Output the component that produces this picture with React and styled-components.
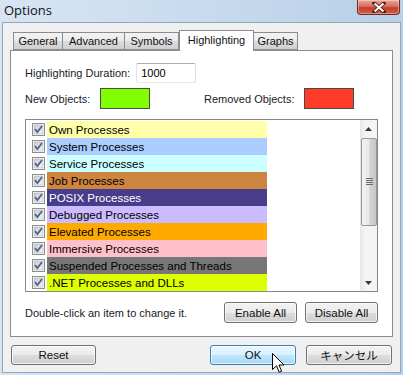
import React from 'react'
import styled, { createGlobalStyle } from 'styled-components'

const GlobalStyle = createGlobalStyle`
  html, body { margin: 0; padding: 0; background: #bcd2ea; }
  body { font-family: "Liberation Sans", Arial, sans-serif; }
`

const Window = styled.div`
  position: relative;
  width: 403px;
  height: 375px;
  display: flex;
  flex-direction: column;
  background: linear-gradient(90deg, #d7e5f3 0%, #c9dcef 45%, #b8cfe8 100%);
  overflow: hidden;
`
const TitleBar = styled.div`
  height: 22px;
  display: flex;
  align-items: flex-start;
  justify-content: space-between;
`
const Title = styled.div`
  font-family: "Open Sans", "Liberation Sans", sans-serif;
  font-size: 13px;
  color: #111;
  padding: 1px 0 0 4px;
  line-height: 18px;
`
const CloseBtn = styled.div`
  width: 43px;
  height: 15px;
  margin-right: 3px;
  box-sizing: border-box;
  border: 1px solid #6e2b22;
  border-top: none;
  border-radius: 0 0 4px 4px;
  background: linear-gradient(180deg, #e9a797 0%, #d7705f 45%, #c0402f 55%, #d25d43 100%);
  display: flex;
  align-items: center;
  justify-content: center;
  box-shadow: inset 0 0 0 1px rgba(255,255,255,0.35);
`
const Client = styled.div`
  flex: 1;
  margin: 0 2px 2px 2px;
  border: 1px solid #93a6bb;
  background: #f0f0f0;
  display: flex;
  flex-direction: column;
  padding-top: 7px;
`
const TabStrip = styled.div`
  display: flex;
  align-items: flex-end;
  height: 20px;
  padding-left: 10px;
  position: relative;
  z-index: 1;
`
const Tab = styled.div`
  box-sizing: border-box;
  width: ${p => p.w}px;
  height: ${p => (p.active ? 21 : 18)}px;
  margin-bottom: ${p => (p.active ? -1 : 0)}px;
  border: 1px solid #898c95;
  border-bottom: ${p => (p.active ? 'none' : '1px solid #898c95')};
  border-left: ${p => (p.first || p.active ? '1px solid #898c95' : 'none')};
  background: ${p => (p.active ? '#fff' : 'linear-gradient(180deg, #f3f3f3 0%, #ebebeb 50%, #dddddd 51%, #cfcfcf 100%)')};
  font-size: 11px;
  color: #111;
  display: flex;
  align-items: center;
  justify-content: center;
  padding-bottom: ${p => (p.active ? 3 : 0)}px;
`
const Panel = styled.div`
  margin: 0 7px;
  height: 287px;
  box-sizing: border-box;
  border: 1px solid #898c95;
  background: #fff;
  display: flex;
  flex-direction: column;
  padding: 12px 14px 14px 14px;
  font-size: 11px;
  color: #1a1a2a;
`
const Row = styled.div`
  display: flex;
  align-items: center;
  margin-top: ${p => p.mt || 0}px;
`
const Label = styled.span`
  width: ${p => (p.w ? `${p.w}px` : 'auto')};
  flex-shrink: 0;
`
const TextField = styled.div`
  width: 60px;
  height: 20px;
  box-sizing: border-box;
  border: 1px solid #abadb3;
  border-color: #abadb3 #dbdfe6 #e3e9ef #e2e3ea;
  border-radius: 2px;
  margin-left: 6px;
  padding: 0 4px;
  display: flex;
  align-items: center;
  color: #000;
`
const Swatch = styled.div`
  width: 50px;
  height: 21px;
  box-sizing: border-box;
  border: 1px solid #4a4a4a;
  background: ${p => p.color};
`
const Gap = styled.div`
  width: ${p => p.w}px;
`
const ListBox = styled.div`
  margin-top: 10px;
  height: 174px;
  box-sizing: border-box;
  border: 1px solid #828790;
  display: flex;
`
const Items = styled.div`
  flex: 1;
  padding: 1px 0 0 6px;
  display: flex;
  flex-direction: column;
`
const Item = styled.div`
  height: 17px;
  display: flex;
  align-items: center;
`
const Band = styled.div`
  margin-left: 2px;
  width: 218px;
  height: 17px;
  padding-left: 2px;
  background: ${p => p.bg};
  color: ${p => p.fg};
  display: flex;
  align-items: center;
  font-size: 11.5px;
`
const ScrollBar = styled.div`
  width: 17px;
  display: flex;
  flex-direction: column;
  background: linear-gradient(90deg, #e6e6e6 0%, #f4f4f4 30%, #f4f4f4 100%);
`
const Arrow = styled.div`
  height: 17px;
  display: flex;
  align-items: center;
  justify-content: center;
`
const Thumb = styled.div`
  margin: 1px 0 0 1px;
  height: 88px;
  box-sizing: border-box;
  border: 1px solid #979797;
  border-radius: 2px;
  background: linear-gradient(90deg, #f3f3f3 0%, #e8e8e8 50%, #d6d6d6 55%, #c6c6c6 100%);
  display: flex;
  align-items: center;
  justify-content: center;
`
const Track = styled.div`
  flex: 1;
`
const Button = styled.div`
  width: ${p => p.w}px;
  height: ${p => p.h || 21}px;
  box-sizing: border-box;
  border: 1px solid ${p => (p.hover ? '#3c7fb1' : '#707070')};
  border-radius: 3px;
  background: ${p => (p.hover
    ? 'linear-gradient(180deg, #eaf6fd 0%, #d9f0fc 50%, #bee6fd 51%, #a7d9f5 100%)'
    : 'linear-gradient(180deg, #f2f2f2 0%, #ebebeb 50%, #dddddd 51%, #cfcfcf 100%)')};
  box-shadow: inset 0 0 0 1px rgba(255,255,255,0.7);
  display: flex;
  align-items: center;
  justify-content: center;
  font-size: 11.5px;
  font-weight: 400;
  color: #111;
`
const BottomRow = styled.div`
  margin-top: 10px;
  display: flex;
  align-items: center;
  gap: 8px;
  & > span { flex: 1; }
`
const Footer = styled.div`
  display: flex;
  align-items: center;
  padding: 8px 8px 0 8px;
  gap: 10px;
  font-family: "Liberation Sans", "Noto Sans CJK JP", sans-serif;
  & > div:first-child { margin-right: auto; }
`
const Cursor = styled.svg`
  position: absolute;
  left: 272px;
  top: 353px;
`

const items = [
  ['Own Processes', '#ffffaa', '#000'],
  ['System Processes', '#aaccff', '#000'],
  ['Service Processes', '#ccffff', '#000'],
  ['Job Processes', '#cd853f', '#000'],
  ['POSIX Processes', '#483d8b', '#fff'],
  ['Debugged Processes', '#ccbbff', '#000'],
  ['Elevated Processes', '#ffaa00', '#000'],
  ['Immersive Processes', '#ffc0cb', '#000'],
  ['Suspended Processes and Threads', '#777777', '#000'],
  ['.NET Processes and DLLs', '#deff00', '#000'],
]

const tabs = [
  ['General', 50],
  ['Advanced', 62],
  ['Symbols', 54],
  ['Highlighting', 75],
  ['Graphs', 44],
]

function Check() {
  return (
    <svg width="13" height="13" viewBox="0 0 13 13">
      <defs>
        <linearGradient id="cb" x1="0" y1="0" x2="1" y2="1">
          <stop offset="0" stopColor="#cbcbcb" />
          <stop offset="1" stopColor="#f6f6f6" />
        </linearGradient>
      </defs>
      <rect x="0.5" y="0.5" width="12" height="12" fill="#fff" stroke="#8e8f8f" />
      <rect x="2" y="2" width="9" height="9" fill="url(#cb)" stroke="#b0b0b0" strokeWidth="0.6" />
      <path d="M3 6.2 L5.4 9 L10 3" fill="none" stroke="#4c6494" strokeWidth="1.8" />
    </svg>
  )
}

function App() {
  return (
    <>
      <GlobalStyle />
      <Window>
        <TitleBar>
          <Title>Options</Title>
          <CloseBtn>
            <svg width="14" height="11" viewBox="0 0 14 11">
              <path d="M2 1 L12 10 M12 1 L2 10" stroke="#4a1a14" strokeWidth="3.6" strokeLinecap="square" />
              <path d="M2.5 1.5 L11.5 9.5 M11.5 1.5 L2.5 9.5" stroke="#fff" strokeWidth="2" />
            </svg>
          </CloseBtn>
        </TitleBar>
        <Client>
          <TabStrip>
            {tabs.map(([t, w], i) => (
              <Tab key={t} w={w} first={i === 0} active={t === 'Highlighting'}>{t}</Tab>
            ))}
          </TabStrip>
          <Panel>
            <Row>
              <Label>Highlighting Duration:</Label>
              <TextField>1000</TextField>
            </Row>
            <Row mt={5}>
              <Label w={75}>New Objects:</Label>
              <Swatch color="#7fff00" />
              <Gap w={54} />
              <Label w={100}>Removed Objects:</Label>
              <Swatch color="#ff3c28" />
            </Row>
            <ListBox>
              <Items>
                {items.map(([name, bg, fg]) => (
                  <Item key={name}>
                    <Check />
                    <Band bg={bg} fg={fg}>{name}</Band>
                  </Item>
                ))}
              </Items>
              <ScrollBar>
                <Arrow>
                  <svg width="7" height="4" viewBox="0 0 7 4"><path d="M0 4 L3.5 0 L7 4 Z" fill="#3a3a3a" /></svg>
                </Arrow>
                <Thumb>
                  <svg width="7" height="8" viewBox="0 0 7 8">
                    {[0, 2, 4, 6].map(y => (
                      <rect key={y} x="0" y={y} width="7" height="1" fill="#6a6a6a" />
                    ))}
                  </svg>
                </Thumb>
                <Track />
                <Arrow>
                  <svg width="7" height="4" viewBox="0 0 7 4"><path d="M0 0 L7 0 L3.5 4 Z" fill="#3a3a3a" /></svg>
                </Arrow>
              </ScrollBar>
            </ListBox>
            <BottomRow>
              <span>Double-click an item to change it.</span>
              <Button w={73}>Enable All</Button>
              <Button w={73}>Disable All</Button>
            </BottomRow>
          </Panel>
          <Footer>
            <Button w={85} h={20}>Reset</Button>
            <Button w={86} h={20} hover>OK</Button>
            <Button w={86} h={20}>キャンセル</Button>
          </Footer>
        </Client>
        <Cursor width="13" height="21" viewBox="0 0 13 21">
          <path d="M0.5 0.5 L0.5 16.5 L4.5 12.8 L7.2 19.2 L9.6 18.2 L7 12 L12 12 Z" fill="#fff" stroke="#000" strokeWidth="1" />
        </Cursor>
      </Window>
    </>
  )
}

export default App
